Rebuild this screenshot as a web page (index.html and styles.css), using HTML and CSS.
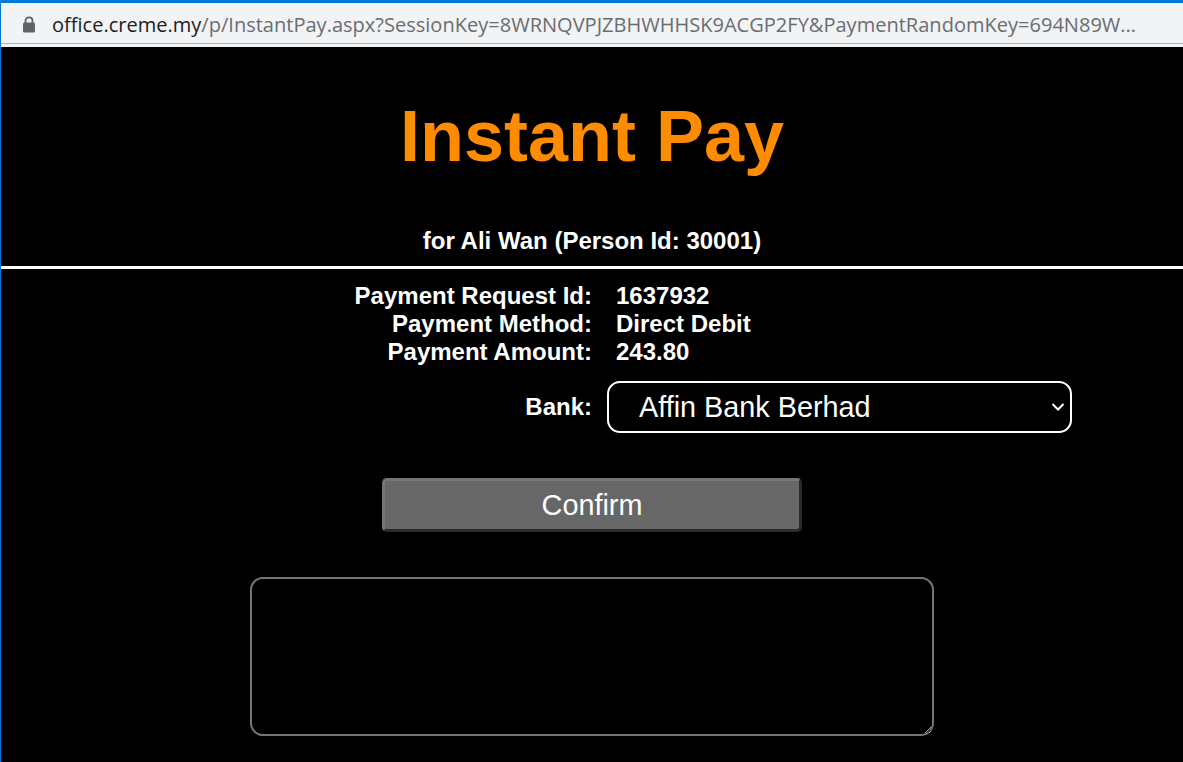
FILE: index.html
```html
<!DOCTYPE html>
<html lang="en">
<head>
  <meta charset="UTF-8" />
  <meta name="viewport" content="width=device-width, initial-scale=1.0"/>
  <title>Instant Pay</title>
  <link rel="stylesheet" href="styles.css">
</head>
<body>
  <!-- Browser address bar -->
  <div class="address-bar">
    <svg class="lock" width="14" height="17" viewBox="0 0 14 17">
      <path d="M3.5 7V4.8C3.5 2.8 5 1.4 7 1.4s3.5 1.4 3.5 3.4V7" fill="none" stroke="#5f6368" stroke-width="1.8"/>
      <rect x="1" y="6.5" width="12" height="10" rx="1.5" fill="#5f6368"/>
    </svg>
    <span class="url"><span class="host">office.creme.my</span>/p/InstantPay.aspx?SessionKey=8WRNQVPJZBHWHHSK9ACGP2FY&amp;PaymentRandomKey=694N89W...</span>
  </div>

  <div class="page">
    <h1>Instant Pay</h1>
    <p class="person">for Ali Wan (Person Id: 30001)</p>
    <hr>

    <div class="details">
      <div class="label">Payment Request Id:</div><div class="value">1637932</div>
      <div class="label">Payment Method:</div><div class="value">Direct Debit</div>
      <div class="label">Payment Amount:</div><div class="value">243.80</div>
    </div>

    <div class="bank-row">
      <label class="label" for="bank">Bank:</label>
      <div class="select-wrap">
        <select id="bank">
          <option>Affin Bank Berhad</option>
        </select>
        <svg class="chevron" width="14" height="10" viewBox="0 0 14 10">
          <path d="M1.5 2l5.5 5.5L12.5 2" fill="none" stroke="#fff" stroke-width="2"/>
        </svg>
      </div>
    </div>

    <button class="confirm">Confirm</button>

    <textarea class="message"></textarea>
  </div>
</body>
</html>
```

FILE: styles.css
```css
/* Global */
* {
  margin: 0;
  padding: 0;
  box-sizing: border-box;
}

html, body {
  height: 100%;
  overflow: hidden;
}

body {
  background-color: #000;
  color: #fff;
  font-family: "Liberation Sans", Arial, sans-serif;
  border-left: 1px solid #0078d7;
}

/* Address bar */
.address-bar {
  display: flex;
  align-items: center;
  height: 47px;
  padding: 2px 0 0 21px;
  background-color: #f1f3f4;
  border-top: 3px solid #0078d7;
  border-bottom: 3px solid #f1f3f4;
  box-shadow: inset 0 -1px 0 #b5b7b9;
}

.lock {
  flex: none;
  margin-right: 16px;
}

.url {
  font-family: "Open Sans", sans-serif;
  font-size: 20.05px;
  color: #6a6e73;
  white-space: nowrap;
}

.host {
  color: #202124;
}

/* Page */
.page {
  display: flex;
  flex-direction: column;
  align-items: center;
}

h1 {
  margin-top: 48px;
  font-size: 72px;
  line-height: 83px;
  color: #ff8c00;
}

.person {
  margin-top: 49px;
  font-size: 24px;
  font-weight: bold;
  line-height: 28px;
}

hr {
  width: 100%;
  height: 3px;
  margin-top: 11px;
  border: none;
  background-color: #fff;
}

.details {
  display: grid;
  grid-template-columns: 591px 1fr;
  column-gap: 24px;
  width: 100%;
  margin-top: 13px;
  font-size: 24px;
  font-weight: bold;
  line-height: 28px;
}

.label {
  text-align: right;
  font-size: 24px;
  font-weight: bold;
}

.bank-row {
  display: grid;
  grid-template-columns: 591px 465px;
  column-gap: 15px;
  align-items: center;
  width: 100%;
  margin-top: 15px;
}

.select-wrap {
  position: relative;
}

select {
  display: block;
  width: 100%;
  height: 52px;
  padding-left: 30px;
  background-color: #000;
  color: #fff;
  border: 2px solid #fff;
  border-radius: 13px;
  font-family: "Liberation Sans", Arial, sans-serif;
  font-size: 28.8px;
  appearance: none;
}

.chevron {
  position: absolute;
  top: 21px;
  right: 7px;
  pointer-events: none;
}

.confirm {
  width: 420px;
  height: 54px;
  margin-top: 45px;
  background-color: #676767;
  color: #fff;
  border: 3px solid;
  border-color: #767676 #2b2b2b #2b2b2b #767676;
  border-radius: 5px;
  font-family: "Liberation Sans", Arial, sans-serif;
  font-size: 28.8px;
}

.message {
  display: block;
  width: 684px;
  height: 159px;
  margin-top: 45px;
  background-color: #000;
  color: #fff;
  border: 2px solid #767676;
  border-radius: 13px;
}
```
